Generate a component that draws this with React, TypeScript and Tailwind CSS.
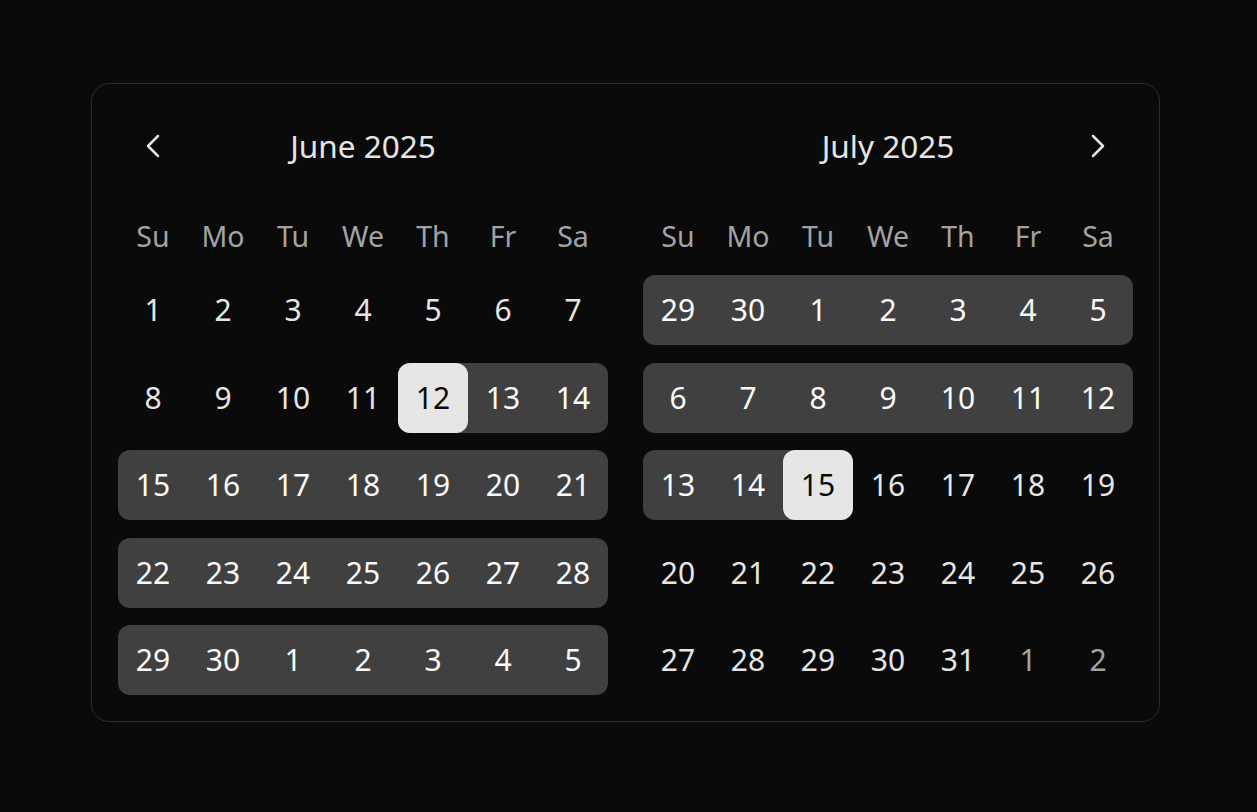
import React from "react";
import { ChevronLeft, ChevronRight } from "lucide-react";

const font = { fontFamily: '"Noto Sans", "Open Sans", sans-serif' };

function dateNum(y: number, m: number, d: number) {
  return y * 10000 + m * 100 + d;
}
const START = dateNum(2025, 6, 12);
const END = dateNum(2025, 7, 15);

function buildMonth(year: number, month: number) {
  const first = new Date(year, month - 1, 1);
  const startDow = first.getDay();
  const daysIn = new Date(year, month, 0).getDate();
  const prevDays = new Date(year, month - 1, 0).getDate();
  const cells: { d: number; outside: boolean; n: number }[] = [];
  for (let i = startDow - 1; i >= 0; i--) {
    const pm = month === 1 ? 12 : month - 1;
    const py = month === 1 ? year - 1 : year;
    cells.push({ d: prevDays - i, outside: true, n: dateNum(py, pm, prevDays - i) });
  }
  for (let d = 1; d <= daysIn; d++) cells.push({ d, outside: false, n: dateNum(year, month, d) });
  let nd = 1;
  while (cells.length % 7 !== 0) {
    const nm = month === 12 ? 1 : month + 1;
    const ny = month === 12 ? year + 1 : year;
    cells.push({ d: nd, outside: true, n: dateNum(ny, nm, nd) });
    nd++;
  }
  const weeks: typeof cells[] = [];
  for (let i = 0; i < cells.length; i += 7) weeks.push(cells.slice(i, i + 7));
  return weeks;
}

const WEEKDAYS = ["Su", "Mo", "Tu", "We", "Th", "Fr", "Sa"];

function Month({
  year,
  month,
  title,
  nav,
}: {
  year: number;
  month: number;
  title: string;
  nav: "left" | "right";
}) {
  const weeks = buildMonth(year, month);
  const inRange = (n: number) => n >= START && n <= END;
  return (
    <div className="w-[490px] flex flex-col">
      <div className="grid grid-cols-7 h-[72px] items-center">
        <div className="flex items-center justify-center">
          {nav === "left" && (
            <ChevronLeft size={40} strokeWidth={1.5} className="text-[#e5e5e5]" />
          )}
        </div>
        <div className="col-span-5 text-center text-[31.5px] text-[#e5e5e5] leading-none">
          {title}
        </div>
        <div className="flex items-center justify-center">
          {nav === "right" && (
            <ChevronRight size={40} strokeWidth={1.5} className="text-[#e5e5e5]" />
          )}
        </div>
      </div>
      <div className="grid grid-cols-7 h-[70px] mt-[19px] items-center">
        {WEEKDAYS.map((w) => (
          <div key={w} className="text-center text-[28.5px] text-[#a3a3a3] leading-none">
            {w}
          </div>
        ))}
      </div>
      <div className="flex flex-col gap-y-[17.5px] mt-[4px]">
        {weeks.map((week, wi) => (
          <div key={wi} className="grid grid-cols-7">
            {week.map((c, ci) => {
              const r = inRange(c.n);
              const isEnd = c.n === START || c.n === END;
              const prevIn = ci > 0 && inRange(week[ci - 1].n);
              const nextIn = ci < 6 && inRange(week[ci + 1].n);
              let wrap = "h-[70px]";
              if (r) {
                wrap += " bg-[#404040]";
                if (!prevIn || c.n === START) wrap += " rounded-l-[12px]";
                if (!nextIn || c.n === END) wrap += " rounded-r-[12px]";
              }
              let inner =
                "h-full w-full flex items-center justify-center text-[30px] leading-none";
              if (isEnd) inner += " bg-[#e6e6e6] text-[#0a0a0a] rounded-[12px]";
              else if (r) inner += " text-[#fafafa]";
              else if (c.outside) inner += " text-[#a3a3a3]";
              else inner += " text-[#e5e5e5]";
              return (
                <div key={ci} className={wrap}>
                  <div className={inner}>{c.d}</div>
                </div>
              );
            })}
          </div>
        ))}
      </div>
    </div>
  );
}

export default function App() {
  return (
    <div className="min-h-[812px] w-full bg-[#0a0a0a] pt-[83px] pl-[91px]" style={font}>
      <div className="inline-flex gap-[35px] rounded-[18px] border border-[#2e2e2e] bg-[#0a0a0a] px-[26px] pt-[26px] pb-[26px]">
        <Month year={2025} month={6} title="June 2025" nav="left" />
        <Month year={2025} month={7} title="July 2025" nav="right" />
      </div>
    </div>
  );
}
